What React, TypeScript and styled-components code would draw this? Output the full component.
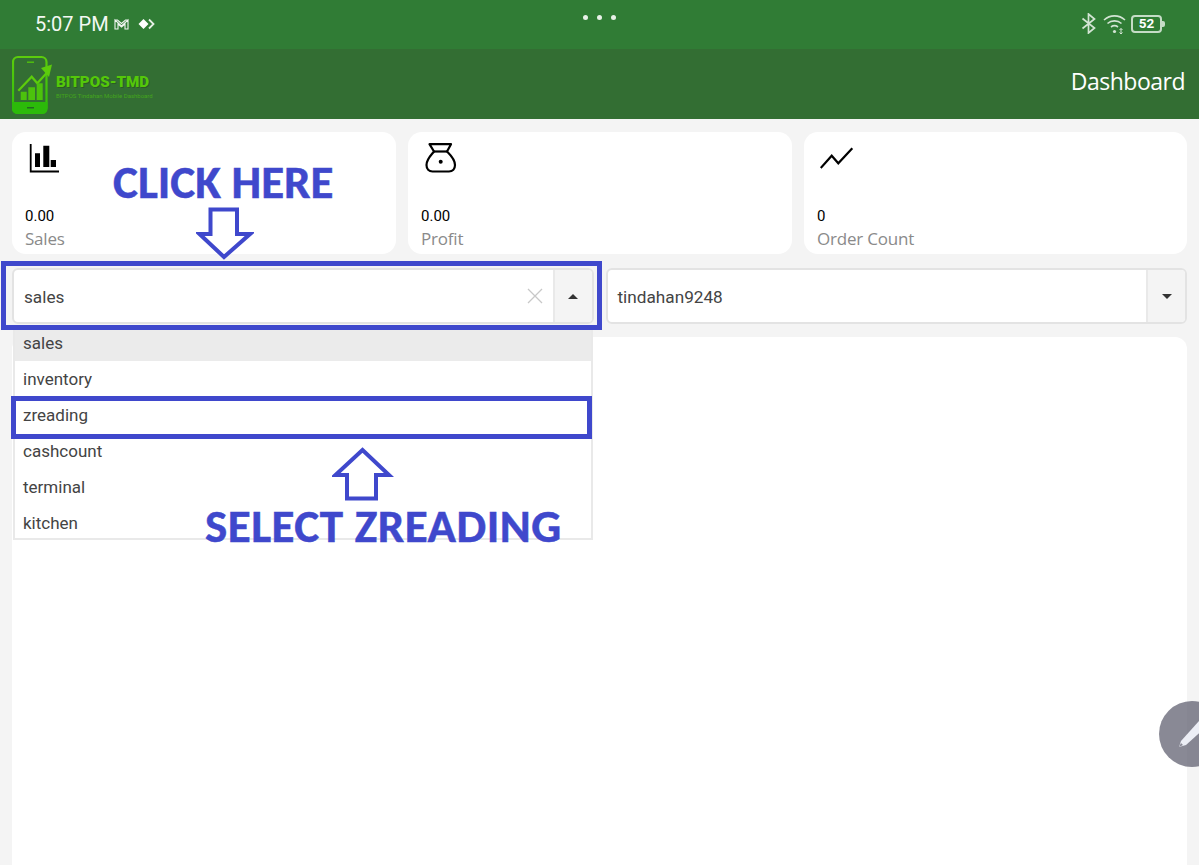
import React from "react";
import styled, { createGlobalStyle } from "styled-components";

const Global = createGlobalStyle`
  html, body { margin: 0; padding: 0; background: #f4f4f4; }
  body { font-family: Roboto, "Liberation Sans", sans-serif; overflow: hidden; }
  * { box-sizing: border-box; }
`;

const INDIGO = "#3f48cc";

const Page = styled.div`
  position: relative;
  width: 1199px;
  height: 865px;
  overflow: hidden;
  display: flex;
  flex-direction: column;
  background: #f4f4f4;
`;

const StatusBar = styled.div`
  height: 49px;
  flex: none;
  background: #307c35;
  display: grid;
  grid-template-columns: 1fr auto 1fr;
  align-items: center;
  padding: 0 35px 2px 35px;
  color: #fff;
`;
const StatusLeft = styled.div`
  display: flex;
  align-items: center;
  gap: 5px;
`;
const Clock = styled.span`
  font: 400 20px Roboto, sans-serif;
  color: #f3f8f3;
`;
const Dots = styled.div`
  display: flex;
  gap: 9px;
  margin-top: -13px;
`;
const Dot = styled.span`
  width: 5px;
  height: 5px;
  border-radius: 50%;
  background: #e8f1e8;
`;
const StatusRight = styled.div`
  display: flex;
  justify-content: flex-end;
  align-items: center;
  gap: 6px;
  color: #d3e4d4;
  padding-right: 2px;
`;
const Battery = styled.div`
  position: relative;
  width: 31px;
  height: 18px;
  border: 2px solid #c5dcc6;
  border-radius: 4px;
  margin-left: -1px;
  display: flex;
  align-items: center;
  justify-content: center;
  &::after {
    content: "";
    position: absolute;
    right: -5px;
    top: 4px;
    width: 3px;
    height: 6px;
    background: #c5dcc6;
    border-radius: 0 2px 2px 0;
  }
`;
const BatteryText = styled.span`
  font: 700 13.5px Roboto, sans-serif;
  color: #fff;
  line-height: 1;
`;

const AppBar = styled.div`
  height: 70px;
  flex: none;
  background: #336e33;
  display: flex;
  align-items: center;
  justify-content: space-between;
  padding: 0 14px 0 12px;
`;
const Brand = styled.div`
  display: flex;
  align-items: center;
  gap: 2px;
`;
const BrandText = styled.div`
  display: flex;
  flex-direction: column;
  margin-top: 6px;
`;
const BrandName = styled.span`
  font: 900 15.2px/17px Roboto, sans-serif;
  color: #54c80a;
  text-shadow: 1px 1px 0 #2c5c22;
  white-space: nowrap;
`;
const BrandTag = styled.span`
  font: 400 6px/8px Roboto, sans-serif;
  color: #43a51c;
  white-space: nowrap;
  margin-top: 1px;
`;
const Title = styled.div`
  font: 400 23px "Open Sans", sans-serif;
  color: #fff;
  letter-spacing: -0.5px;
  padding-bottom: 6px;
`;

const Content = styled.div`
  flex: 1;
  display: flex;
  flex-direction: column;
  padding: 13px 12px 0;
  min-height: 0;
`;
const Cards = styled.div`
  display: grid;
  grid-template-columns: 384px 384px 1fr;
  gap: 12px;
`;
const Card = styled.div`
  height: 122px;
  background: #fff;
  border-radius: 14px;
  padding: 11px 13px 0;
  display: flex;
  flex-direction: column;
`;
const CardIcon = styled.div`
  height: 32px;
  color: #000;
  margin-left: 3px;
  svg {
    display: block;
  }
`;
const CardValue = styled.div`
  margin-top: 31px;
  font: 400 15px/20px Roboto, sans-serif;
  color: #000;
`;
const CardLabel = styled.div`
  font: 400 17px/26px "Open Sans", sans-serif;
  color: #8a8a8a;
  letter-spacing: -0.2px;
`;

const Controls = styled.div`
  display: grid;
  grid-template-columns: 1fr 1fr;
  gap: 12px;
  margin-top: 14px;
`;
const Select = styled.div`
  position: relative;
  height: 56px;
  background: #fff;
  border: 2px solid #e3e3e3;
  border-radius: 6px;
  display: flex;
  align-items: stretch;
`;
const SelectValue = styled.div`
  flex: 1;
  display: flex;
  align-items: center;
  padding: 1px 0 0 10px;
  font: 400 17.2px Roboto, sans-serif;
  color: #444;
`;
const ClearButton = styled.div`
  width: 36px;
  display: flex;
  align-items: center;
  justify-content: center;
  color: #c8c8c8;
`;
const CaretBox = styled.div`
  width: 39px;
  background: #f4f4f4;
  border-left: 2px solid #e9e9e9;
  border-radius: 0 4px 4px 0;
  display: flex;
  align-items: center;
  justify-content: center;
`;
const Caret = styled.span<{ $up?: boolean }>`
  width: 0;
  height: 0;
  border-left: 5px solid transparent;
  border-right: 5px solid transparent;
  ${(p) =>
    p.$up ? "border-bottom: 5px solid #333;" : "border-top: 5px solid #333;"}
`;
const Menu = styled.div`
  position: absolute;
  top: 55px;
  left: -1px;
  right: -1px;
  height: 215px;
  background: #fff;
  border: 2px solid #e9e9e9;
  border-top: none;
  z-index: 2;
`;
const MenuItem = styled.div<{ $active?: boolean }>`
  height: 36px;
  display: flex;
  align-items: center;
  padding-left: 8px;
  font: 400 17px Roboto, sans-serif;
  color: #444;
  background: ${(p) => (p.$active ? "#ebebeb" : "transparent")};
`;
const Panel = styled.div`
  flex: 1;
  margin-top: 13px;
  background: #fff;
  border-radius: 12px 12px 0 0;
`;

const Fab = styled.div`
  position: absolute;
  left: 1159px;
  top: 701px;
  width: 66px;
  height: 66px;
  border-radius: 50%;
  background: rgba(92, 92, 108, 0.72);
  z-index: 3;
  padding: 19px 0 0 18px;
`;

const Overlay = styled.div`
  position: absolute;
  inset: 0;
  z-index: 4;
  pointer-events: none;
`;
const Frame = styled.div<{ $l: number; $t: number; $w: number; $h: number }>`
  position: absolute;
  left: ${(p) => p.$l}px;
  top: ${(p) => p.$t}px;
  width: ${(p) => p.$w}px;
  height: ${(p) => p.$h}px;
  border: 5px solid ${INDIGO};
`;
const Callout = styled.div<{ $l: number; $t: number; $track: number }>`
  position: absolute;
  left: ${(p) => p.$l}px;
  top: ${(p) => p.$t}px;
  font: 700 47px/54px Carlito, Lato, sans-serif;
  letter-spacing: ${(p) => p.$track}px;
  color: ${INDIGO};
  white-space: nowrap;
  -webkit-text-stroke: 0.5px ${INDIGO};
`;
const ArrowSvg = styled.svg<{ $l: number; $t: number }>`
  position: absolute;
  left: ${(p) => p.$l}px;
  top: ${(p) => p.$t}px;
`;

const BarIcon = () => (
  <svg width="32" height="32" viewBox="0 0 32 32" fill="none">
    <path d="M2.7 1V28.5H31" stroke="currentColor" strokeWidth="1.8" />
    <path d="M7 10.3h5V24H7zM15.3 2.7h6V24h-6zM22.7 17H28v7h-5.3z" fill="currentColor" />
  </svg>
);
const BagIcon = () => (
  <svg width="34" height="32" viewBox="0 0 34 32" fill="none" stroke="currentColor" strokeWidth="2.2" strokeLinejoin="round">
    <path d="M5.5 1.2H27L23 8.5C26.5 12 31 16 31 22C31 26 28.5 28.5 25 28.5H8.5C5 28.5 2.5 26 2.5 22C2.5 16 7.5 12 10 8.5Z" />
    <path d="M10 8.5H23" />
    <circle cx="16.7" cy="18.7" r="2" fill="currentColor" stroke="none" />
  </svg>
);
const LineIcon = () => (
  <svg width="34" height="32" viewBox="0 0 34 32" fill="none" stroke="currentColor" strokeWidth="2.2">
    <path d="M0.7 25L11.7 12.7L18.3 20.3L32.3 5.3" />
  </svg>
);

const Logo = () => (
  <svg width="42" height="60" viewBox="0 0 42 60" fill="none">
    <defs>
      <linearGradient id="lg" x1="0" y1="0" x2="0" y2="1">
        <stop offset="0" stopColor="#5ccc0c" />
        <stop offset="1" stopColor="#2cbc0a" />
      </linearGradient>
    </defs>
    <rect x="1" y="3" width="33.5" height="56" rx="5" stroke="url(#lg)" strokeWidth="2.2" />
    <path d="M0 48H35.5V54Q35.5 60 30 60H6Q0 60 0 54Z" fill="#2cba0a" />
    <rect x="15" y="7.5" width="7" height="1.4" fill="#52c20c" />
    <rect x="15" y="53" width="7" height="1.5" fill="#236a22" />
    <path d="M6.3 36.7L19.7 22.7L25.3 29.3L36 17.5" stroke="#5ccc0c" strokeWidth="2.2" />
    <path d="M40 10.5L29 14L37 23Z" fill="#5ccc0c" />
    <path d="M8.7 37.7h6V46h-6zM16.3 33.3h6.7V46h-6.7zM24.7 29.3h6V46h-6z" fill="#4cc20c" />
  </svg>
);

export default function App() {
  return (
    <Page>
      <Global />
      <StatusBar>
        <StatusLeft>
          <Clock>5:07 PM</Clock>
          <svg width="15" height="12" viewBox="0 0 15 12" fill="none" stroke="#f0f5f0">
            <path d="M1 11V2L7.5 8L14 2V11H11V6L7.5 9L4 6V11ZM1 2H3.5L7.5 5.5L11.5 2H14" strokeWidth="1.1" />
          </svg>
          <svg width="17" height="12" viewBox="0 0 17 12" style={{ marginLeft: 4 }}>
            <path d="M5.5 1L10.5 6L5.5 11L0.5 6Z" fill="#fff" />
            <path d="M11 1.5L15.5 6L11 10.5" fill="none" stroke="#e6efe6" strokeWidth="1.8" />
          </svg>
        </StatusLeft>
        <Dots>
          <Dot />
          <Dot />
          <Dot />
        </Dots>
        <StatusRight>
          <svg width="16" height="21" viewBox="0 0 16 21" fill="none" stroke="currentColor" strokeWidth="1.7">
            <path d="M1.5 5.5L13.5 15L7.5 20V1L13.5 6L1.5 15.5" />
          </svg>
          <svg width="23" height="20" viewBox="0 0 23 20" fill="none" stroke="currentColor" strokeWidth="1.6">
            <path d="M1 6C7 0.5 16 0.5 22 6M4.5 9.5C8.5 6 14.5 6 18.5 9.5M8 13C10 11.5 13 11.5 15 13" />
            <circle cx="11.5" cy="17.5" r="1.6" fill="currentColor" stroke="none" />
            <path d="M18 14.5V20M16.5 16L18 14.5L19.5 16M16.5 18.5L18 20L19.5 18.5" strokeWidth="1" />
          </svg>
          <Battery>
            <BatteryText>52</BatteryText>
          </Battery>
        </StatusRight>
      </StatusBar>

      <AppBar>
        <Brand>
          <Logo />
          <BrandText>
            <BrandName>BITPOS-TMD</BrandName>
            <BrandTag>BITPOS Tindahan Mobile Dashboard</BrandTag>
          </BrandText>
        </Brand>
        <Title>Dashboard</Title>
      </AppBar>

      <Content>
        <Cards>
          <Card>
            <CardIcon>
              <BarIcon />
            </CardIcon>
            <CardValue>0.00</CardValue>
            <CardLabel>Sales</CardLabel>
          </Card>
          <Card>
            <CardIcon>
              <BagIcon />
            </CardIcon>
            <CardValue>0.00</CardValue>
            <CardLabel>Profit</CardLabel>
          </Card>
          <Card>
            <CardIcon>
              <LineIcon />
            </CardIcon>
            <CardValue>0</CardValue>
            <CardLabel>Order Count</CardLabel>
          </Card>
        </Cards>

        <Controls>
          <Select>
            <SelectValue>sales</SelectValue>
            <ClearButton>
              <svg width="16" height="16" viewBox="0 0 16 16" stroke="currentColor" strokeWidth="1.3">
                <path d="M1 1L15 15M15 1L1 15" />
              </svg>
            </ClearButton>
            <CaretBox>
              <Caret $up />
            </CaretBox>
            <Menu>
              <MenuItem $active>sales</MenuItem>
              <MenuItem>inventory</MenuItem>
              <MenuItem>zreading</MenuItem>
              <MenuItem>cashcount</MenuItem>
              <MenuItem>terminal</MenuItem>
              <MenuItem>kitchen</MenuItem>
            </Menu>
          </Select>
          <Select>
            <SelectValue>tindahan9248</SelectValue>
            <CaretBox>
              <Caret />
            </CaretBox>
          </Select>
        </Controls>

        <Panel />
      </Content>

      <Fab>
        <svg width="30" height="30" viewBox="0 0 30 30">
          <path d="M2 27L4 21L23 0L30 6L9 25Z" fill="#eceef5" />
          <path d="M2 27L4 23L6 25Z" fill="#8a8a96" />
        </svg>
      </Fab>

      <Overlay>
        <Frame $l={1} $t={261} $w={601} $h={69} />
        <Frame $l={11} $t={396} $w={581} $h={43} />
        <Callout $l={113} $t={155} $track={0}>CLICK HERE</Callout>
        <Callout $l={205} $t={499} $track={0.5}>SELECT ZREADING</Callout>
        <ArrowSvg $l={196} $t={206} width="58" height="55" viewBox="0 0 58 55" stroke={INDIGO} strokeWidth="4" fill="none">
          <path d="M14.5 3.5H41V28H54L28 51L3.5 28H14.5Z" />
        </ArrowSvg>
        <ArrowSvg $l={332} $t={447} width="62" height="55" viewBox="0 0 62 55" stroke={INDIGO} strokeWidth="4" fill="none">
          <path d="M30.5 3L57 28H44V51.5H15V28H3.5Z" />
        </ArrowSvg>
      </Overlay>
    </Page>
  );
}
